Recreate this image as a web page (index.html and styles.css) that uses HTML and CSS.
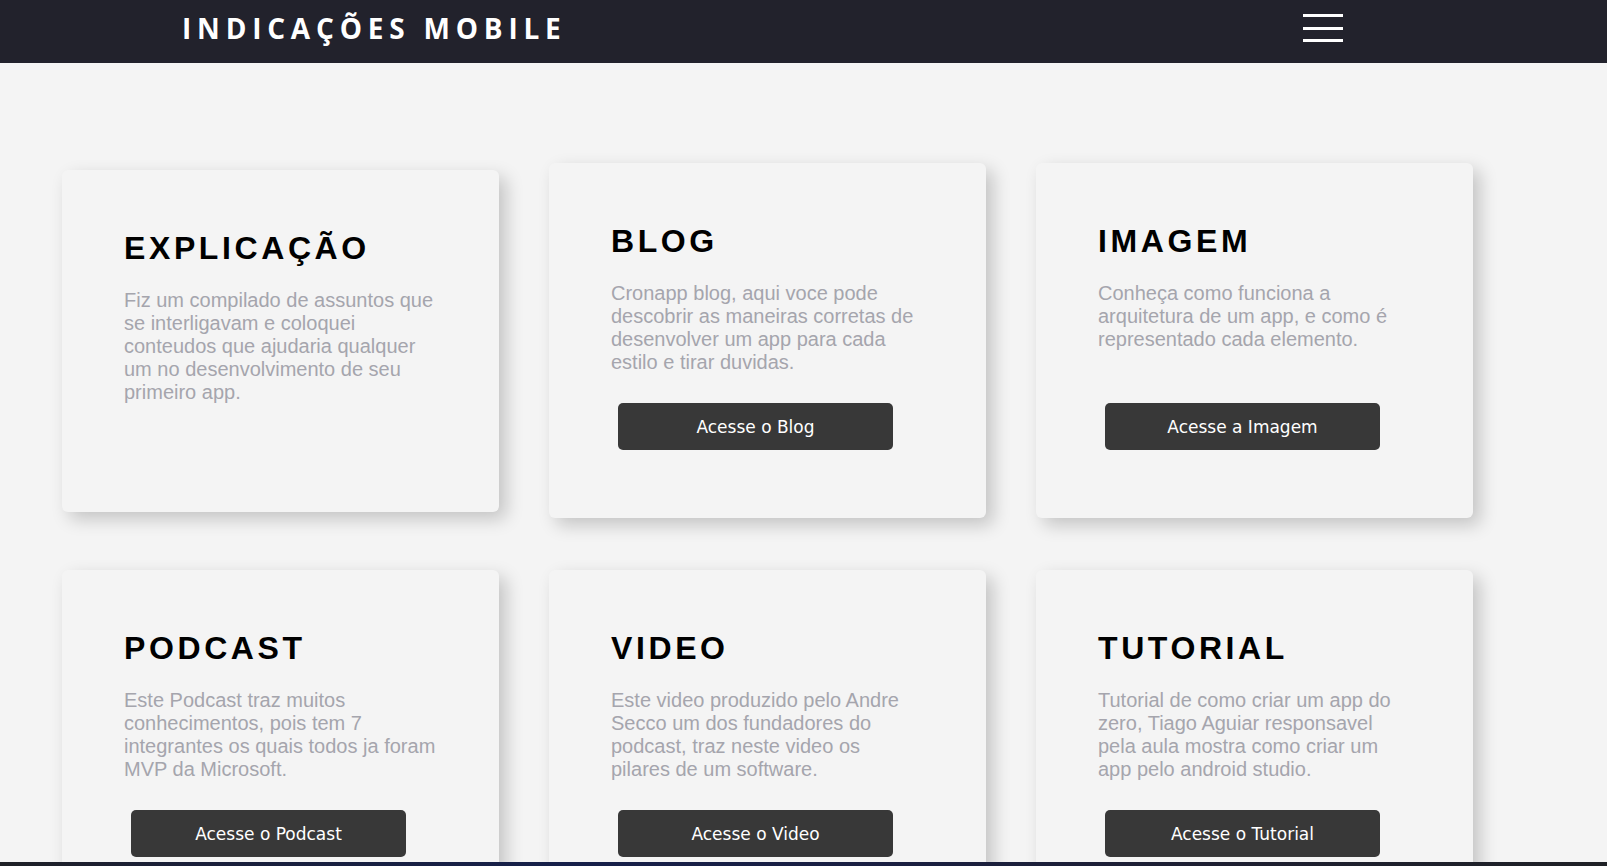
FILE: index.html
```html
<!DOCTYPE html>
<html lang="pt-BR">
<head>
<meta charset="utf-8">
<title>Indicações Mobile</title>
<link rel="stylesheet" href="styles.css">
</head>
<body>
<header class="topbar">
  <h1 class="brand">INDICAÇÕES MOBILE</h1>
  <button class="menu" aria-label="Menu">
    <span class="menu__line"></span>
    <span class="menu__line"></span>
    <span class="menu__line"></span>
  </button>
</header>

<main class="grid">
  <section class="card card--text">
    <h2 class="card__title">EXPLICAÇÃO</h2>
    <p class="card__text">Fiz um compilado de assuntos que se interligavam e coloquei conteudos que ajudaria qualquer um no desenvolvimento de seu primeiro app.</p>
  </section>
  <section class="card">
    <h2 class="card__title">BLOG</h2>
    <p class="card__text">Cronapp blog, aqui voce pode descobrir as maneiras corretas de desenvolver um app para cada estilo e tirar duvidas.</p>
    <button class="card__btn">Acesse o Blog</button>
  </section>
  <section class="card">
    <h2 class="card__title">IMAGEM</h2>
    <p class="card__text">Conheça como funciona a arquitetura de um app, e como é representado cada elemento.</p>
    <button class="card__btn">Acesse a Imagem</button>
  </section>
  <section class="card">
    <h2 class="card__title">PODCAST</h2>
    <p class="card__text">Este Podcast traz muitos conhecimentos, pois tem 7 integrantes os quais todos ja foram MVP da Microsoft.</p>
    <button class="card__btn">Acesse o Podcast</button>
  </section>
  <section class="card">
    <h2 class="card__title">VIDEO</h2>
    <p class="card__text">Este video produzido pelo Andre Secco um dos fundadores do podcast, traz neste video os pilares de um software.</p>
    <button class="card__btn">Acesse o Video</button>
  </section>
  <section class="card">
    <h2 class="card__title">TUTORIAL</h2>
    <p class="card__text">Tutorial de como criar um app do zero, Tiago Aguiar responsavel pela aula mostra como criar um app pelo android studio.</p>
    <button class="card__btn">Acesse o Tutorial</button>
  </section>
</main>

<div class="bottom-strip"></div>
</body>
</html>
```

FILE: styles.css
```css
html, body {
  margin: 0;
  padding: 0;
  overflow: hidden;
}

body {
  background: #f4f4f4;
  font-family: "Liberation Sans", Arial, sans-serif;
}

.topbar {
  height: 63px;
  box-sizing: border-box;
  background: #22222c;
  display: flex;
  justify-content: space-between;
  align-items: flex-start;
  padding: 9px 264px 0 182px;
}

.brand {
  margin: 0;
  font-family: "Open Sans", sans-serif;
  font-weight: 700;
  font-size: 28px;
  line-height: 38px;
  letter-spacing: 5.8px;
  color: #ffffff;
}

.menu {
  margin-top: 5px;
  padding: 0;
  border: 0;
  background: transparent;
  display: flex;
  flex-direction: column;
  gap: 9.5px;
  width: 40px;
}

.menu__line {
  display: block;
  width: 40px;
  height: 3px;
  background: #ffffff;
}

.grid {
  display: grid;
  grid-template-columns: repeat(3, 437px);
  column-gap: 50px;
  row-gap: 52px;
  align-items: center;
  padding: 100px 0 0 62px;
}

.card {
  background: #f4f4f4;
  border-radius: 6px;
  box-shadow: 7px 7px 18px rgba(0, 0, 0, 0.2);
  padding: 60px 62.5px 68px 62px;
}

.card--text {
  padding-bottom: 79px;
}

.card__title {
  margin: 0 0 22px;
  font-family: "Liberation Sans", Arial, sans-serif;
  font-weight: 700;
  font-size: 32px;
  line-height: 37px;
  letter-spacing: 3.6px;
  color: #000000;
}

.card__text {
  margin: 0 0 29px;
  min-height: 92px;
  font-size: 20px;
  line-height: 23px;
  color: #a5a5ad;
}

.card__btn {
  display: block;
  margin-left: 7px;
  width: 275px;
  height: 47px;
  border: 0;
  border-radius: 5px;
  background: #383838;
  color: #ffffff;
  font-family: "DejaVu Sans", Verdana, sans-serif;
  font-size: 17px;
  padding-top: 2px;
  cursor: pointer;
}

.bottom-strip {
  position: fixed;
  left: 0;
  right: 0;
  bottom: 0;
  height: 4px;
  background: linear-gradient(90deg, #1f2126 0%, #1a1f3a 12%, #16204a 35%, #1a2042 55%, #1e2032 75%, #1f2126 100%);
}
```
